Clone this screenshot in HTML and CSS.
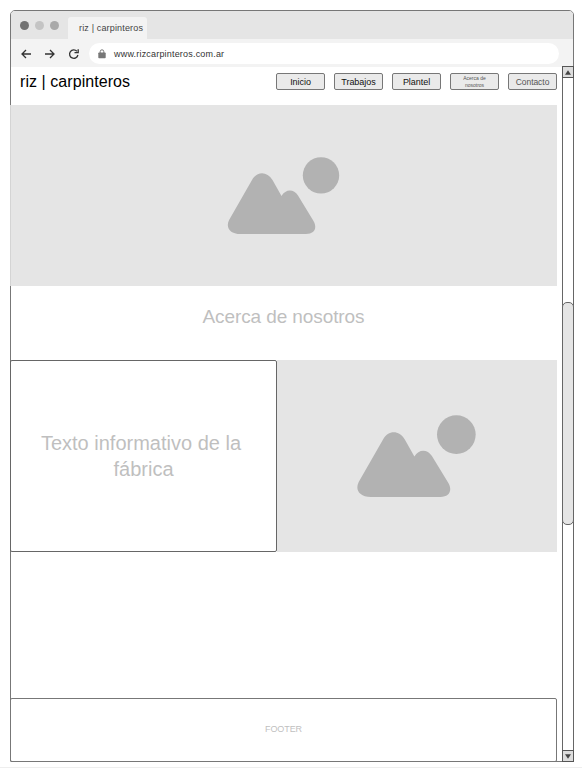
FILE: index.html
```html
<!DOCTYPE html>
<html lang="es">
<head>
<meta charset="utf-8">
<title>riz | carpinteros</title>
<link rel="stylesheet" href="styles.css">
</head>
<body>
<svg class="defs" width="0" height="0" aria-hidden="true">
  <symbol id="picture" viewBox="0 0 112 78">
    <path d="M1.600 63 L24.500 23 C29.500 14 39.500 14 45 23 L54 39 C58 32 66 31.500 70.500 38.500 L86 64 C90 71 87 77 78.500 77 L13 77 C2 77 -2 70 1.600 63 Z"/>
    <circle cx="93.500" cy="18.400" r="18.200"/>
  </symbol>
</svg>
<div class="window">
  <header class="tabs">
    <i class="dot dark"></i><i class="dot light"></i><i class="dot mid"></i>
    <div class="tab">riz | carpinteros</div>
  </header>
  <div class="toolbar">
    <svg class="nav-icons" width="64" height="16" viewBox="0 0 64 16">
      <path d="M11 8H2M6 4L2 8l4 4M25 8h9M30 4l4 4-4 4"/>
      <path d="M56.900 5.300A4.200 4.200 0 1 0 57.900 9M58.200 3.200V6.600H54.500"/>
    </svg>
    <div class="address">
      <svg width="8" height="10" viewBox="0 0 8 10"><rect x=".3" y="3.500" width="7.400" height="5.800" rx=".8" fill="#777"/><path d="M2.200 4V2.600a1.800 1.800 0 0 1 3.600 0V4" fill="none" stroke="#777"/></svg>
      <span>www.rizcarpinteros.com.ar</span>
    </div>
  </div>
  <div class="view">
    <main class="page">
      <div class="site-head">
        <h1>riz | carpinteros</h1>
        <nav>
          <a>Inicio</a><a>Trabajos</a><a>Plantel</a><a class="tiny">Acerca de nosotros</a><a class="soft">Contacto</a>
        </nav>
      </div>
      <div class="hero"><svg width="113" height="78"><use href="#picture"/></svg></div>
      <h2>Acerca de nosotros</h2>
      <section class="about">
        <div class="box"><p><span>Texto informativo de la</span> fábrica</p></div>
        <div class="photo"><svg width="119" height="83"><use href="#picture"/></svg></div>
      </section>
      <footer>FOOTER</footer>
    </main>
    <div class="scrollbar">
      <div class="arrow"><svg width="6" height="5" viewBox="0 0 8 6"><path d="M4 0l4 6h-8z"/></svg></div>
      <div class="track"><div class="thumb"></div></div>
      <div class="arrow"><svg width="6" height="5" viewBox="0 0 8 6"><path d="M4 6L0 0h8z"/></svg></div>
    </div>
  </div>
</div>
</body>
</html>
```
FILE: styles.css
```css
* { box-sizing: border-box; }
body {
  margin: 0;
  height: 768px;
  padding: 10px 8px 0 10px;
  border-bottom: 1px solid #eee;
  background: #fff;
  font-family: "Liberation Sans", Arial, sans-serif;
  overflow: hidden;
}
.defs { position: absolute; }
svg { display: block; }
.window {
  display: flex;
  flex-direction: column;
  height: 752px;
  border: 1px solid #777;
  border-radius: 5px 5px 1px 1px;
}
.tabs {
  display: flex;
  align-items: center;
  height: 28px;
  padding-left: 9px;
  background: #e5e5e5;
  border-radius: 4px 4px 0 0;
}
.dot {
  width: 9px;
  height: 9px;
  margin-right: 6px;
  border-radius: 50%;
}
.dark { background: #737373; }
.light { background: #c4c4c4; }
.mid { background: #a9a9a9; }
.tab {
  align-self: flex-end;
  width: 79px;
  height: 22px;
  margin-left: 3px;
  padding-left: 11px;
  border-radius: 3px 3px 0 0;
  background: #f3f3f3;
  color: #444;
  font-size: 9px;
  letter-spacing: .16px;
  line-height: 22px;
  white-space: nowrap;
}
.toolbar {
  display: flex;
  align-items: center;
  height: 28px;
  padding: 1px 14px 0 9px;
  background: #f3f3f3;
}
.nav-icons {
  fill: none;
  stroke: #333;
  stroke-width: 1.300;
}
.address {
  display: flex;
  flex: 1;
  align-items: center;
  gap: 8px;
  height: 21px;
  margin-left: 5px;
  padding-left: 9px;
  border-radius: 11px;
  background: #fff;
  color: #333;
  font-size: 9px;
  letter-spacing: .19px;
}
.view {
  display: flex;
  justify-content: space-between;
  height: 696px;
  margin: -1px -1px -1px;
}
.page {
  display: flex;
  flex-direction: column;
  width: 547px;
  padding-top: 1px;
}
.site-head {
  display: flex;
  justify-content: space-between;
  height: 38px;
  padding-left: 10px;
}
h1 {
  margin: 5px 0 0;
  color: #000;
  font-size: 16px;
  font-weight: 400;
  letter-spacing: .06px;
  line-height: 19px;
}
nav {
  display: flex;
  gap: 9px;
  padding-top: 6px;
}
nav a {
  display: flex;
  align-items: center;
  justify-content: center;
  width: 49px;
  height: 17px;
  border: 1px solid #777;
  border-radius: 2px;
  background: #eaeaea;
  color: #111;
  font-size: 9px;
  letter-spacing: -.05px;
  text-align: center;
}
nav .tiny {
  padding: 0 8px;
  color: #555;
  font-size: 5px;
  letter-spacing: 0;
  line-height: 7px;
}
nav .soft {
  color: #555;
  font-size: 8.500px;
}
.hero {
  height: 181px;
  padding: 52px 0 0 217px;
  border-left: 1px solid #d4d4d4;
  background: #e5e5e5;
  fill: #b2b2b2;
}
.hero svg { margin-left: -1px; }
h2 {
  height: 74px;
  margin: 0;
  color: #bfbfbf;
  font-size: 19px;
  font-weight: 400;
  letter-spacing: -.1px;
  line-height: 61px;
  text-align: center;
}
.about {
  display: flex;
  height: 192px;
}
.box {
  display: flex;
  align-items: center;
  justify-content: center;
  width: 267px;
  border: 1px solid #666;
  border-radius: 2px;
  color: #bfbfbf;
  font-size: 20px;
  line-height: 26px;
  text-align: center;
}
.box p {
  width: 210px;
  margin: 0;
}
.box span {
  display: block;
  padding-right: 5px;
  white-space: nowrap;
}
.photo {
  flex: 1;
  padding: 55px 0 0 80px;
  background: #e5e5e5;
  fill: #b2b2b2;
}
footer {
  height: 64px;
  margin-top: auto;
  border: 1px solid #777;
  border-radius: 2px;
  color: #bfbfbf;
  font-size: 9px;
  letter-spacing: -.1px;
  line-height: 60px;
  text-align: center;
}
.scrollbar {
  display: flex;
  flex-direction: column;
  width: 12px;
  background: #fff;
}
.arrow {
  display: flex;
  align-items: center;
  justify-content: center;
  height: 12px;
  border: 1px solid #555;
  background: #ddd;
  fill: #444;
}
.track {
  flex: 1;
  padding-top: 224px;
  border: solid #666;
  border-width: 0 1px;
}
.thumb {
  height: 223px;
  margin: 0 -1px;
  border: 1px solid #666;
  border-radius: 5px;
  background: #e5e5e5;
}
```
